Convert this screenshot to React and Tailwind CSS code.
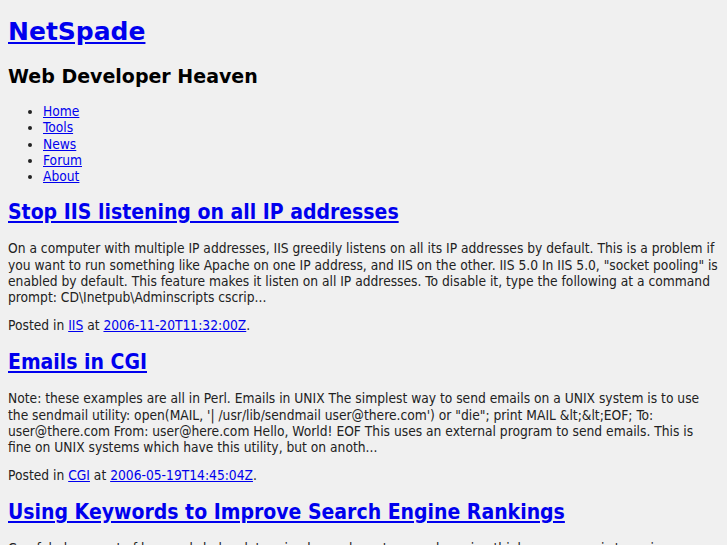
export default function App() {
  const posts = [
    {
      title: 'Stop IIS listening on all IP addresses',
      body: 'On a computer with multiple IP addresses, IIS greedily listens on all its IP addresses by default. This is a problem if you want to run something like Apache on one IP address, and IIS on the other. IIS 5.0 In IIS 5.0, "socket pooling" is enabled by default. This feature makes it listen on all IP addresses. To disable it, type the following at a command prompt: CD\\Inetpub\\Adminscripts cscrip...',
      cat: 'IIS',
      date: '2006-11-20T11:32:00Z',
    },
    {
      title: 'Emails in CGI',
      body: 'Note: these examples are all in Perl. Emails in UNIX The simplest way to send emails on a UNIX system is to use the sendmail utility: open(MAIL, \'| /usr/lib/sendmail user@there.com\') or "die"; print MAIL &lt;&lt;EOF; To: user@there.com From: user@here.com Hello, World! EOF This uses an external program to send emails. This is fine on UNIX systems which have this utility, but on anoth...',
      cat: 'CGI',
      date: '2006-05-19T14:45:04Z',
    },
    {
      title: 'Using Keywords to Improve Search Engine Rankings',
      body: 'Careful placement of keywords helps determine how relevant a search engine thinks your page is to a given search term. Keywords are the words people type into a search engine to find what they are looking for.',
      cat: 'SEO',
      date: '2006-04-02T10:12:00Z',
    },
  ];

  return (
    <div className="h-[545px] overflow-hidden bg-[#f0f0f0] px-2 pt-[17px] text-[#222] font-['DejaVu_Sans',sans-serif]">
      <h1 className="text-[25px] font-bold leading-[29px]">
        <a href="#" className="text-[#0000ee] underline">NetSpade</a>
      </h1>
      <h2 className="mt-[19px] text-[19px] font-bold leading-[22px] text-black">Web Developer Heaven</h2>
      <ul className="mt-[16px] list-disc pl-[35px] text-[13.7px] leading-[16.3px] font-['DejaVu_Sans_Condensed','DejaVu_Sans',sans-serif]">
        {['Home', 'Tools', 'News', 'Forum', 'About'].map((n) => (
          <li key={n}>
            <a href="#" className="text-[#0000ee] underline">{n}</a>
          </li>
        ))}
      </ul>
      <div className="mt-[16px] font-['DejaVu_Sans_Condensed','DejaVu_Sans',sans-serif]">
        {posts.map((p) => (
          <div key={p.title} className="mb-[17px]">
            <h2 className="text-[21px] font-bold leading-[24px]">
              <a href="#" className="text-[#0000ee] underline">{p.title}</a>
            </h2>
            <p className="mt-[16px] text-[13.7px] leading-[16.3px]">{p.body}</p>
            <p className="mt-[11.5px] text-[13.7px] leading-[16.3px]">
              Posted in <a href="#" className="text-[#0000ee] underline">{p.cat}</a> at{' '}
              <a href="#" className="text-[#0000ee] underline">{p.date}</a>.
            </p>
          </div>
        ))}
      </div>
    </div>
  );
}
